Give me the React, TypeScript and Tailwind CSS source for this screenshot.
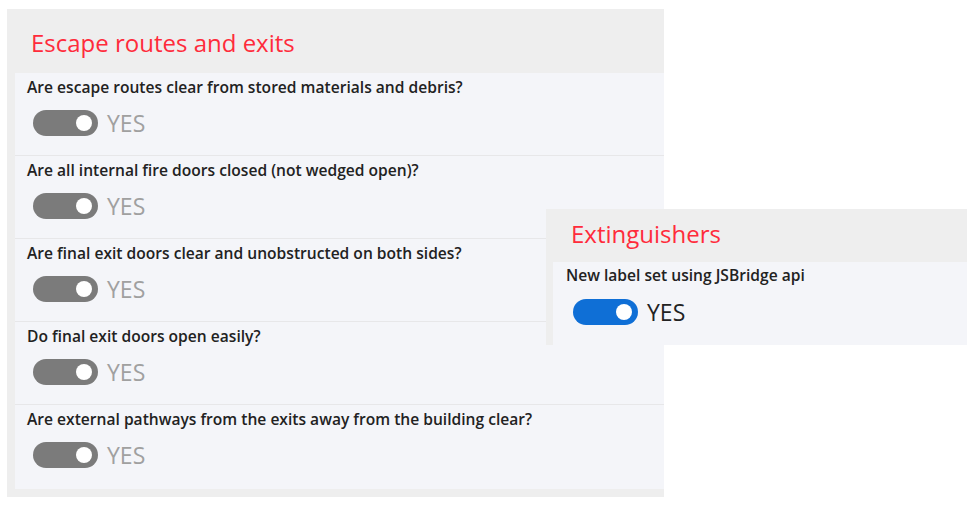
const questions = [
  'Are escape routes clear from stored materials and debris?',
  'Are all internal fire doors closed (not wedged open)?',
  'Are final exit doors clear and unobstructed on both sides?',
  'Do final exit doors open easily?',
  'Are external pathways from the exits away from the building clear?',
]

const Toggle = ({ on }: { on?: boolean }) => (
  <div className="flex items-center gap-[9px]">
    <div
      className={`flex h-[26px] w-[65px] items-center justify-end rounded-full pr-[6px] ${
        on ? 'bg-[#0f6fd6]' : 'bg-[#7b7b7b]'
      }`}
    >
      <div className="h-[16px] w-[16px] rounded-full bg-white" />
    </div>
    <span
      className={`text-[23px] leading-none ${
        on ? 'text-[#222222]' : 'text-[#a0a0a0]'
      }`}
    >
      YES
    </span>
  </div>
)

const Question = ({ text, last, on }: { text: string; last?: boolean; on?: boolean }) => (
  <div
    className={`flex flex-col pl-[12px] pt-[4px] ${
      last ? 'h-[84px]' : 'h-[83px] border-b border-[#e7e7e9]'
    }`}
  >
    <div className="text-[15.6px] font-semibold leading-[21px] text-[#222222]">
      {text}
    </div>
    <div className="mt-[12px] pl-[6px]">
      <Toggle on={on} />
    </div>
  </div>
)

export default function App() {
  return (
    <div
      className="relative h-[507px] w-[975px] overflow-hidden bg-white"
      style={{ fontFamily: '"Open Sans", "Noto Sans", sans-serif' }}
    >
      <div className="ml-[7px] mt-[9px] flex h-[488px] w-[657px] flex-col bg-[#eeeeee]">
        <div className="flex h-[64px] items-center pl-[24px] pt-[4px] text-[24px] text-[#ff2b3b]">
          Escape routes and exits
        </div>
        <div className="ml-[8px] bg-[#f4f5f9]">
          {questions.map((q, i) => (
            <Question key={q} text={q} last={i === questions.length - 1} />
          ))}
        </div>
      </div>

      <div className="absolute left-[546px] top-[209px] flex h-[136px] w-[421px] flex-col bg-[#eeeeee]">
        <div className="flex h-[53px] items-center pb-[4px] pl-[25px] text-[24px] text-[#ff2b3b]">
          Extinguishers
        </div>
        <div className="ml-[7px] flex-1 bg-[#f4f5f9] pl-[13px] pt-[3px]">
          <div className="text-[15.6px] font-semibold leading-[21px] text-[#222222]">
            New label set using JSBridge api
          </div>
          <div className="mt-[13px] pl-[7px]">
            <Toggle on />
          </div>
        </div>
      </div>
    </div>
  )
}
